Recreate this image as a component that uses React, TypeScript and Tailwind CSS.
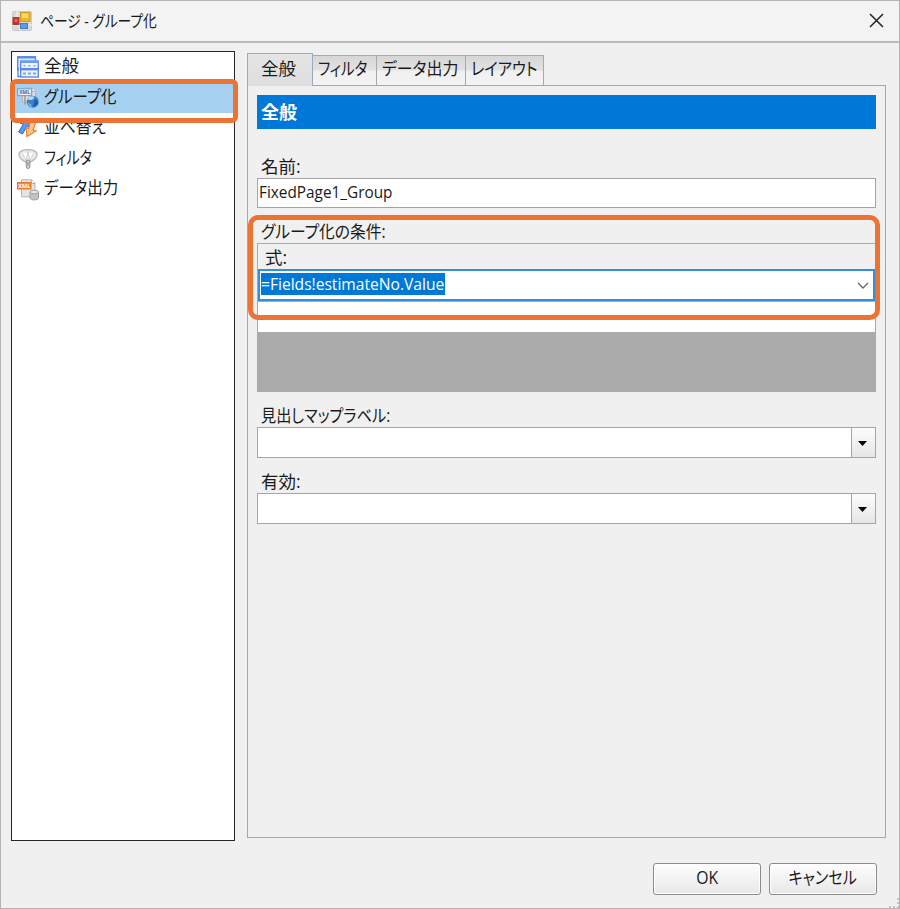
import clsx from "clsx";
import type {ReactNode} from "react";

const DesignerIcon = () => (
  <svg width="20" height="20" viewBox="0 0 20 20">
    <rect x="0.500" y="0.500" width="19" height="19" rx="1" fill="#d9d9d9" stroke="#c9c9c9"/>
    <path d="M0 7h8M0 14h8M8 14v6M14 14h6M5 0v7" stroke="#f4f4f4" strokeWidth="1"/>
    <rect x="1" y="6.500" width="6" height="7" fill="#c2302a" stroke="#a8403a"/>
    <rect x="2.500" y="8" width="3" height="3" fill="#e4685c"/>
    <rect x="8.500" y="1.500" width="9.500" height="9" fill="#f0b91c" stroke="#d19a20"/>
    <rect x="10" y="2.500" width="6" height="4.500" fill="#fbdc6a"/>
    <rect x="8.500" y="12.500" width="7" height="5" fill="#5f9aea" stroke="#4577c4"/>
  </svg>
);

const GeneralIcon = () => (
  <svg width="22" height="22" viewBox="0 0 22 22">
    <path d="M0.700 15V0.700H18.500V5" fill="#dbe8fd" stroke="#5b8bea" strokeWidth="1.400"/>
    <rect x="0" y="0" width="19" height="2.500" fill="#5b8dea"/>
    <rect x="3.700" y="5.200" width="17.600" height="7.500" fill="#eef4fe" stroke="#5b8bea" strokeWidth="1.400"/>
    <rect x="3" y="4.500" width="19" height="2.500" fill="#6d9bef"/>
    <path d="M6.500 9.800h2M11.500 9.800h2M16.500 9.800h2" stroke="#7ea4ee" strokeWidth="1.400"/>
    <path d="M1 12v8.500h2" fill="none" stroke="#5b8bea" strokeWidth="1.400"/>
    <rect x="3.700" y="13.700" width="17.600" height="7.300" fill="#eef4fe" stroke="#5b8bea" strokeWidth="1.400"/>
    <path d="M6 17.500h3M11 17.500h3M16 17.500h3" stroke="#7ea4ee" strokeWidth="2"/>
  </svg>
);

const GroupIcon = () => (
  <svg width="22" height="22" viewBox="0 0 22 22">
    <path d="M5.500 1h10l3 3v11h-13z" fill="#dedede" stroke="#b4b4b4"/>
    <path d="M15 1v3.500h3.500" fill="#f7f7f7" stroke="#b5b5b5"/>
    <rect x="0.600" y="1.800" width="14" height="6.800" fill="#eaf0fb" stroke="#7fa0dd" strokeWidth="1.200"/>
    <text x="7.600" y="7" textAnchor="middle" fontSize="5" fontWeight="bold" fill="#566682">XML</text>
    <path d="M8 9v8.500" stroke="#9a9a9a" strokeWidth="1.500"/>
    <circle cx="15.800" cy="14.800" r="6" fill="#3b82c9"/>
    <path d="M10.500 12.500c1-3 5-4 7-2.500-1 2-2 3-4 3z" fill="#b9dcf8"/>
    <path d="M18 12c2 1 3.500 3 3 4.500-1 2-3 3-5 3.800z" fill="#1f5ca8"/>
    <path d="M11 16c2 0 3 1 4 4-2-.500-3-1.500-4-4z" fill="#82b8ea"/>
  </svg>
);

const SortIcon = () => (
  <svg width="22" height="22" viewBox="0 0 22 22">
    <path d="M1.500 15l5-8-3-.500 7.500-4 1.500 8-2.500-1.500-4.500 8z" fill="#5c9af0" stroke="#2f6fd8" strokeWidth="1"/>
    <path d="M14.500 2.500l4.500 2-3 8.500 3 1-9 5.500-1-9 2.500 1z" fill="#ffc58c" stroke="#ee7a30" strokeWidth="1.200"/>
  </svg>
);

const FilterIcon = () => (
  <svg width="22" height="22" viewBox="0 0 22 22">
    <path d="M2 6.500c0-6.500 18-6.500 18 0 0 3-4 6-6.500 7.500h-5C6 12.500 2 9.500 2 6.500z" fill="#ececec" stroke="#b5b5b5" strokeWidth="1.300"/>
    <path d="M5 5c1.500 2 3 5 4 8l2-10 2 10c1-3 2.500-6 4-8" fill="#fff" stroke="#d2d2d2"/>
    <rect x="9.300" y="12" width="3.600" height="8.500" rx="1.800" fill="#d4d4d4" stroke="#8f8f8f"/>
    <path d="M11 14v4" stroke="#8a8a8a" strokeWidth="1"/>
  </svg>
);

const DataOutputIcon = () => (
  <svg width="22" height="22" viewBox="0 0 22 22">
    <path d="M4.500 0.800h10l3.500 3.500v13.500H4.500z" fill="#e4e4e4" stroke="#b3b3b3"/>
    <path d="M14.500 1v3.500H18" fill="#fff" stroke="#b3b3b3"/>
    <rect x="0.500" y="3.500" width="13.500" height="6.500" fill="#f58a3c" stroke="#e8732a"/>
    <text x="7.300" y="8.700" textAnchor="middle" fontSize="5.500" fontWeight="bold" fill="#fff">XML</text>
    <path d="M13 13v6c0 2.600 8.500 2.600 8.500 0v-6z" fill="#c4c4c4" stroke="#a0a0a0"/>
    <ellipse cx="17.200" cy="13" rx="4.200" ry="1.800" fill="#e6e6e6" stroke="#a0a0a0"/>
  </svg>
);

const categories = [
  {name: "全般", icon: <GeneralIcon/>, scale: ""},
  {name: "グループ化", icon: <GroupIcon/>, scale: "scale-x-[0.885]"},
  {name: "並べ替え", icon: <SortIcon/>, scale: "scale-x-[0.9]"},
  {name: "フィルタ", icon: <FilterIcon/>, scale: "scale-x-[0.81]"},
  {name: "データ出力", icon: <DataOutputIcon/>, scale: "scale-x-[0.885]"},
];

const tabs = [
  {name: "フィルタ", width: "w-[64px]", scale: "scale-x-[0.83]"},
  {name: "データ出力", width: "w-[89px]", scale: "scale-x-[0.91]"},
  {name: "レイアウト", width: "w-[78px]", scale: "scale-x-[0.87]"},
];

const Label = ({children, scale}: {children: ReactNode, scale?: string}) => (
  <div className="h-[22px] pl-[4px] leading-[21px]">
    <span className={clsx("inline-block origin-left", scale)}>{children}</span>
  </div>
);

const ComboBox = () => (
  <div className="flex h-[31px] border border-[#a5a5a5] bg-white">
    <div className="flex-1"/>
    <div className="flex w-[24px] items-center justify-center border-l border-[#a5a5a5] bg-linear-to-b from-[#fcfcfc] to-[#e6e6e6] pt-px pr-[2px]">
      <svg width="9" height="5" viewBox="0 0 9 5"><path d="M0 0h9L4.500 5z" fill="#000"/></svg>
    </div>
  </div>
);

const DialogButton = ({children, scale}: {children: ReactNode, scale?: string}) => (
  <button className="h-[32px] w-[108px] rounded-[3px] border border-[#8c8c8c] bg-linear-to-b from-[#fdfdfd] to-[#e8e8e8] pb-[2px] shadow-[inset_0_0_0_1px_#fff]">
    <span className={clsx("inline-block", scale)}>{children}</span>
  </button>
);

const App = () => (
  <div className="relative flex h-[909px] w-[900px] flex-col overflow-hidden border border-[#b4b4b4] bg-[#f0f0f0] font-['Open_Sans','Noto_Sans_CJK_JP',sans-serif] text-[17.5px] leading-none whitespace-nowrap text-[#1a1a1a] [font-feature-settings:'palt']">
    <header className="flex h-[42px] shrink-0 items-center border-b-2 border-[#bababa] bg-[#f3f3f3] pr-[15px] pb-px pl-[11px]">
      <DesignerIcon/>
      <span className="ml-[8px] inline-block origin-left scale-x-[0.86] text-[16px]">ページ - グループ化</span>
      <svg className="ml-auto" width="15" height="15" viewBox="0 0 15 15"><path d="M1 1l13 13M14 1L1 14" stroke="#222" strokeWidth="1.500"/></svg>
    </header>

    <div className="flex pt-[8px] pl-[10px]">
      <aside className="relative h-[790px] w-[224px] shrink-0 border border-[#262626] bg-white">
        {categories.map((category, index) => (
          <div
            key={category.name}
            className={clsx("flex h-[30.600px] items-center pl-[5px]", index === 1 && "bg-[#a6d0f0]")}
          >
            {category.icon}
            <span className={clsx("ml-[5px] inline-block origin-left pb-[3px]", category.scale)}>{category.name}</span>
          </div>
        ))}
        <div className="absolute top-[27px] -left-[2px] h-[44px] w-[228px] rounded-[6px] border-[5px] border-[#eb7333]"/>
      </aside>

      <main className="ml-[12px] w-[639px]">
        <div className="relative z-10 flex h-[35px] items-end">
          <div className="h-[33px] w-[66px] border border-b-0 border-[#94abc4] bg-linear-to-b from-[#e4e4e4] to-[#dedede] pt-[6px] pl-[13px]">
            全般
          </div>
          {tabs.map(tab => (
            <div
              key={tab.name}
              className={clsx("mb-px flex h-[30px] items-center border-t border-r border-[#a8a8a8] bg-[linear-gradient(#d6d6d6_0%,#e2e2e2_48%,#f0f0f0_52%,#f3f3f3_100%)] pb-[3px] pl-[5px]", tab.width)}
            >
              <span className={clsx("inline-block origin-left", tab.scale)}>{tab.name}</span>
            </div>
          ))}
        </div>

        <section className="relative -mt-px h-[753px] border border-[#94abc4] px-[9px] pt-[9px]">
          <div className="h-[34px] bg-[#0078d7] pl-[4px] text-[18px] leading-[35px] font-bold text-white">全般</div>

          <div className="mt-[27px]"><Label>名前:</Label></div>
          <div className="h-[30px] border border-[#a5a5a5] bg-white pl-px text-[16.500px] leading-[26px]">
            <span className="inline-block origin-left scale-x-[0.93]">FixedPage1_Group</span>
          </div>

          <div className="mt-[13px]"><Label scale="scale-x-[0.9]">グループ化の条件:</Label></div>
          <div className="h-[149px] border border-b-0 border-[#a9a9a9] bg-[#ababab]">
            <div className="h-[25px] bg-[#f0f0f0] pl-[7px] leading-[27px]">式:</div>
            <div className="flex h-[32px] items-center border-2 border-[#338fdb] bg-white pr-[4px] pb-[2px] pl-px">
              <span className="inline-block h-[22px] w-[184px] bg-[#0078d7] text-[16.500px] leading-[21px] text-white">
                <span className="inline-block origin-left scale-x-[0.945]">=Fields!estimateNo.Value</span>
              </span>
              <svg className="mt-[2px] ml-auto" width="12" height="7" viewBox="0 0 12 7"><path d="M1 1l5 5 5-5" fill="none" stroke="#666" strokeWidth="1.300"/></svg>
            </div>
            <div className="h-[31px] border-t border-[#a9a9a9] bg-white"/>
          </div>
          <div className="absolute top-[129px] left-0 h-[105px] w-[632px] rounded-[10px] border-[5px] border-[#eb7333]"/>

          <div className="mt-[13px]"><Label scale="scale-x-[0.865]">見出しマップラベル:</Label></div>
          <ComboBox/>

          <div className="mt-[13px]"><Label>有効:</Label></div>
          <ComboBox/>
        </section>
      </main>
    </div>

    <footer className="mt-[22px] flex justify-end gap-[8px] pr-[22px]">
      <DialogButton scale="scale-x-[0.9]">OK</DialogButton>
      <DialogButton scale="scale-x-[0.86]">キャンセル</DialogButton>
    </footer>
    <svg className="absolute right-0 bottom-0" width="10" height="10" viewBox="0 0 10 10">
      <path d="M8 0h2v2h-2zM8 4h2v2h-2zM8 8h2v2h-2zM4 8h2v2h-2zM0 8h2v2h-2z" fill="#c4c4c4"/>
    </svg>
  </div>
);

export default App;
